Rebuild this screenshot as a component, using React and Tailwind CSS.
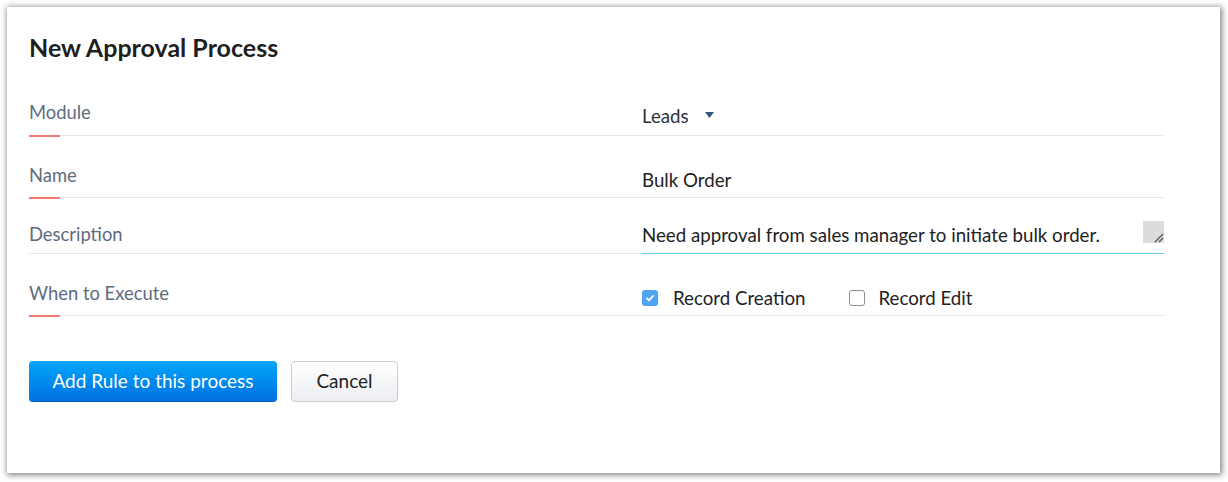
import React from "react";

const Row = ({ label, required = true, h, lpb, vpb, focus = false, children }) => (
    <div className={"flex items-end " + h}>
        <div className={"relative w-[613px] border-b border-[#e8e8e8] " + lpb}>
            <span className="text-[18.4px] leading-6 text-[#5d6b7e]">{label}</span>
            {required && <div className="absolute left-0 -bottom-[2px] w-[31px] h-[2px] bg-[#f47a72]" />}
        </div>
        <div className="flex-1 flex flex-col">
            <div className={"flex items-center " + vpb}>{children}</div>
            {focus ? <div className="h-[1px] bg-[#62cdf5]" /> : <div className="h-[1px] bg-[#e8e8e8]" />}
        </div>
    </div>
);

const App = () => {
    return (
        <div className="w-[1228px] h-[482px] bg-white pl-[7px] pt-[7px]" style={{ fontFamily: "Lato, 'Open Sans', sans-serif" }}>
            <div className="w-[1213px] h-[466px] bg-white shadow-[1px_1px_6px_1px_rgba(0,0,0,0.5)] pl-[22px] pr-[56px] pt-[25px]">
                <h1 className="text-[25px] leading-[30px] font-bold text-[#1f1f1f]">New Approval Process</h1>

                <Row label="Module" h="h-[74px]" lpb="pb-[10px]" vpb="pb-[7px]">
                    <span className="text-[18.7px] leading-6 text-[#2b3340]">Leads</span>
                    <svg className="ml-[16px] mt-[-2px]" width="9" height="6" viewBox="0 0 9 6">
                        <path d="M0 0 H9 L4.5 6 Z" fill="#34557a" />
                    </svg>
                </Row>

                <Row label="Name" h="h-[62px]" lpb="pb-[9px]" vpb="pb-[5px]">
                    <span className="text-[18.7px] leading-6 text-[#222]">Bulk Order</span>
                </Row>

                <Row label="Description" required={false} focus h="h-[56px]" lpb="pb-[6px]" vpb="pb-[6px]">
                    <span className="text-[18.7px] leading-6 text-[#222]">Need approval from sales manager to initiate bulk order.</span>
                    <div className="ml-auto w-[21px] h-[22px] mt-[-6px] bg-[#dcdcdc] flex items-end justify-end">
                        <svg width="12" height="12" viewBox="0 0 12 12">
                            <path d="M3 11 L11 3 M7 11 L11 7" stroke="#555" strokeWidth="1.3" />
                        </svg>
                    </div>
                </Row>

                <Row label="When to Execute" h="h-[62px]" lpb="pb-[9px]" vpb="pb-[5px]">
                    <div className="flex items-center">
                        <div className="w-[16px] h-[16px] rounded-[3px] bg-[#4ea3f4] flex items-center justify-center">
                            <svg width="10" height="8" viewBox="0 0 10 8">
                                <path d="M1.5 4 L4 6.3 L8.5 1.5" stroke="white" strokeWidth="1.8" fill="none" />
                            </svg>
                        </div>
                        <span className="ml-[15px] text-[18.7px] leading-6 text-[#222]">Record Creation</span>
                    </div>
                    <div className="flex items-center ml-[44px]">
                        <div className="w-[16px] h-[16px] rounded-[3px] border border-[#8f8f8f] bg-white" />
                        <span className="ml-[13px] text-[18.7px] leading-6 text-[#222]">Record Edit</span>
                    </div>
                </Row>

                <div className="flex gap-[14px] mt-[45px]">
                    <button className="w-[248px] h-[41px] rounded-[4px] bg-gradient-to-b from-[#08a6f8] to-[#0270e2] border-b border-[#0060c8] text-white text-[19px]">
                        Add Rule to this process
                    </button>
                    <button className="w-[107px] h-[41px] rounded-[4px] bg-gradient-to-b from-white to-[#eceef2] border border-[#c9ccd3] text-[#222] text-[19px]">
                        Cancel
                    </button>
                </div>
            </div>
        </div>
    );
};

export default App;
